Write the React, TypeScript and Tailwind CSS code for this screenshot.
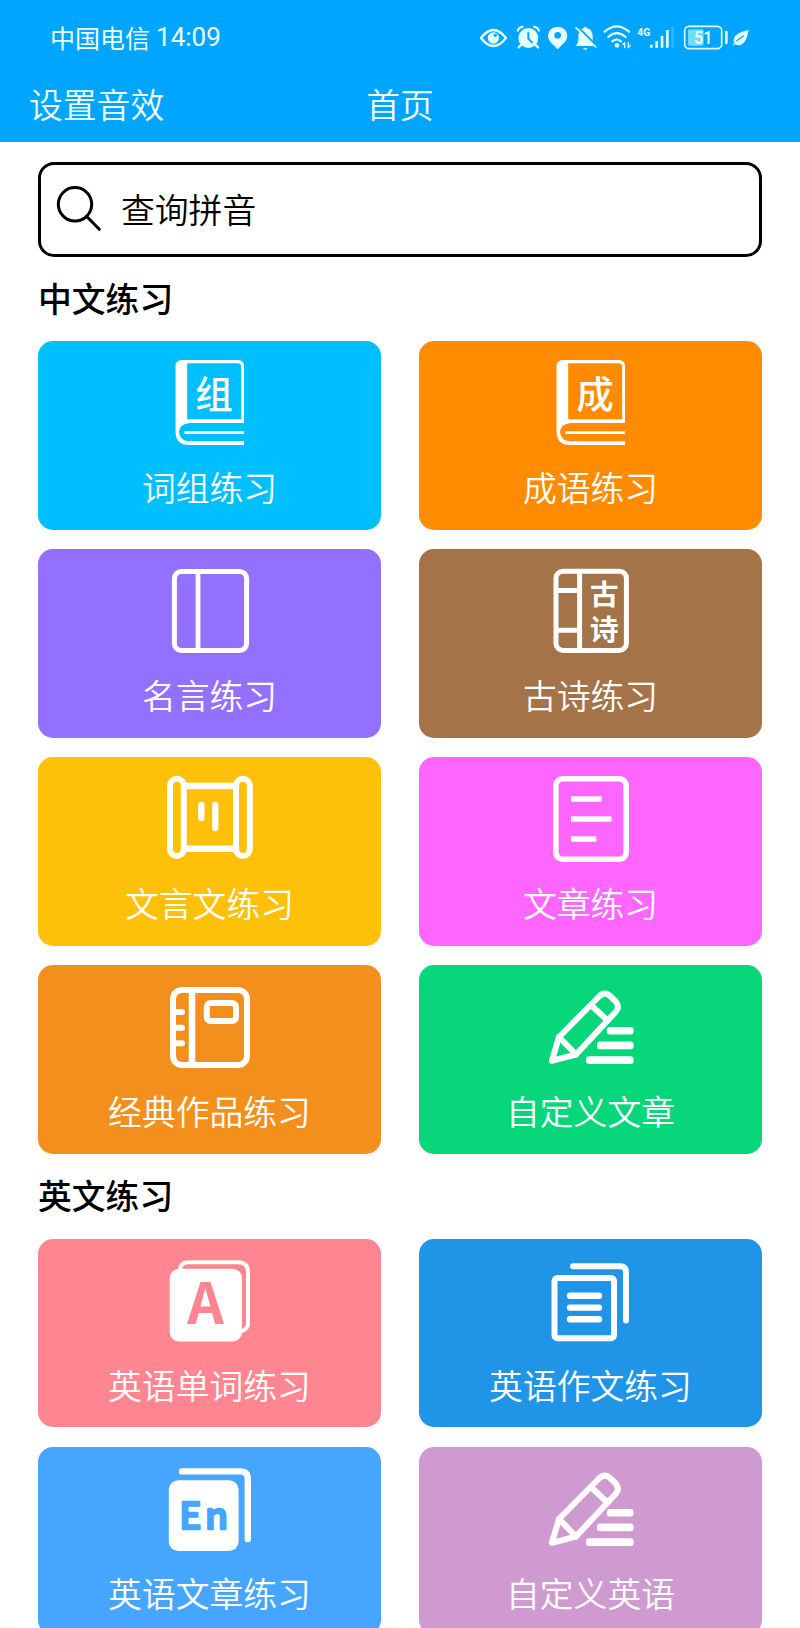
import type { ReactNode } from "react";

const cjk = "font-['Noto_Sans_CJK_SC',sans-serif]";

function StatusIcons() {
  return (
    <svg className="h-[60px] w-[310px]" viewBox="0 0 930 180" fill="none" stroke="#e6ffff" strokeLinecap="round" strokeLinejoin="round">
      {/* eye */}
      <path d="M63 84Q100 36 138 84Q100 132 63 84Z" strokeWidth="7" />
      <circle cx="100" cy="84" r="17" fill="#e6ffff" stroke="none" />
      <circle cx="106" cy="76" r="5" fill="#00a5ff" stroke="none" />
      {/* alarm */}
      <circle cx="205" cy="84" r="30" fill="#e6ffff" stroke="none" />
      <path d="M173 62Q176 52 188 50M237 62Q234 52 222 50" strokeWidth="6" />
      <path d="M184 104L176 112M226 104L234 112" strokeWidth="7" />
      <path d="M205 68V86L216 97" stroke="#00a5ff" strokeWidth="6" />
      {/* location */}
      <path d="M293 118C281 104 264 94 264 77A29 27 0 0 1 322 77C322 94 305 104 293 118Z" fill="#e6ffff" stroke="none" />
      <circle cx="293" cy="76" r="10" fill="#00a5ff" stroke="none" />
      {/* muted bell */}
      <path d="M346 108Q355 100 355 86V76Q357 56 371 55Q376 44 381 55Q397 58 398 78V88Q399 100 406 108Z" fill="#e6ffff" stroke="none" />
      <path d="M369 115H383Q376 124 369 115Z" fill="#e6ffff" stroke="none" />
      <path d="M353 50L412 109" stroke="#00a5ff" strokeWidth="6" />
      <path d="M348 53L407 111" strokeWidth="5" />
      {/* wifi */}
      <path d="M434 65Q470 33 507 65M445 81Q470 58 497 81M457 94Q470 83 483 94" strokeWidth="6.5" />
      <circle cx="471" cy="106" r="7" fill="#e6ffff" stroke="none" />
      <path d="M489 103L494 98V113M505 98V113L511 106" strokeWidth="4" />
      {/* cellular */}
      <text x="532" y="78" fontSize="35" fontWeight="700" fill="#e6ffff" stroke="none" className="font-[Roboto,sans-serif]" textLength="39" lengthAdjust="spacingAndGlyphs">4G</text>
      <path d="M574 104V113M590 93V113M606 77V113M622 60V113" strokeWidth="8" strokeLinecap="butt" />
      <path d="M638 50V113" stroke="#24baff" strokeWidth="8" strokeLinecap="butt" />
      {/* battery */}
      <rect x="674" y="49" width="111" height="67" rx="13" strokeWidth="5" />
      <rect x="684" y="58" width="47" height="49" rx="5" fill="#6cdcff" stroke="none" />
      <path d="M799 66V99" strokeWidth="8" />
      <text x="702" y="101" fontSize="54" fontWeight="500" fill="#f0ffff" stroke="none" className="font-[Roboto,sans-serif]" textLength="55" lengthAdjust="spacingAndGlyphs">51</text>
      {/* leaf */}
      <path d="M866 60Q859 104 836 106Q816 105 822 85Q829 67 866 60Z" fill="#e6ffff" stroke="none" />
      <path d="M820 104Q832 88 850 78" stroke="#00a5ff" strokeWidth="4" />
      <path d="M821 104L829 95" strokeWidth="4" />
    </svg>
  );
}

function Icon({ children }: { children: ReactNode }) {
  return (
    <svg className="size-[100px] shrink-0" viewBox="0 0 100 100" fill="none" stroke="#fff" strokeWidth="6" strokeLinecap="round" strokeLinejoin="round">
      {children}
    </svg>
  );
}

function BookIcon({ char }: { char: string }) {
  return (
    <Icon>
      <path
        d="M22 9H77.5Q84 9 84 15.5V72H30Q19 73 19 81Q20 90.3 30 90.3H84V94H29Q15.5 94 15.5 80V15.5Q15.5 9 22 9ZM27.2 12.3V68.3H81.2V16Q81.2 12.3 77.5 12.3Z"
        fill="#fff"
        fillRule="evenodd"
        stroke="none"
      />
      <path d="M24.5 81.7H84" strokeWidth="2.8" strokeLinecap="butt" />
      <text x="54" y="56.5" textAnchor="middle" fontSize="37.5" fontWeight="500" fill="#fff" stroke="none" className="font-['Noto_Sans_CJK_SC',sans-serif]">{char}</text>
    </Icon>
  );
}

function NotebookIcon() {
  return (
    <Icon>
      <rect x="14.4" y="12.5" width="72.2" height="79" rx="7" strokeWidth="5" />
      <path d="M38 13V91" strokeWidth="4.8" strokeLinecap="butt" />
    </Icon>
  );
}

function PoetryIcon() {
  return (
    <Icon>
      <rect x="15" y="12.2" width="70.4" height="79.2" rx="7" strokeWidth="5" />
      <path d="M38.6 13V91M15 31.5H38M15 71.2H38" strokeWidth="5" strokeLinecap="butt" />
      <g fontSize="28.5" fontWeight="700" fill="#fff" stroke="none" textAnchor="middle" className="font-['Noto_Sans_CJK_SC',sans-serif]">
        <text x="63.2" y="46">古</text>
        <text x="63.2" y="80.5">诗</text>
      </g>
    </Icon>
  );
}

function ScrollIcon() {
  return (
    <Icon>
      <rect x="10" y="11.8" width="13.8" height="77.2" rx="6.9" />
      <rect x="76" y="11.8" width="13.8" height="77.2" rx="6.9" />
      <path d="M24 19H76M24 81.7H76" strokeWidth="6.6" />
      <path d="M41.3 38V51M55.3 38V61" strokeWidth="6.3" />
    </Icon>
  );
}

function ArticleIcon() {
  return (
    <Icon>
      <rect x="14.8" y="11.8" width="70.4" height="80.4" rx="7" strokeWidth="5.6" />
      <path d="M30 32H60.5M30 52H70.5M30 72H55.3" strokeWidth="5.6" strokeLinecap="butt" />
    </Icon>
  );
}

function ClassicIcon() {
  return (
    <Icon>
      <rect x="13" y="15" width="74" height="75" rx="9" />
      <path d="M32 16V89" strokeWidth="6.5" />
      <rect x="46.8" y="28" width="29.2" height="18" rx="4" />
      <path d="M13 37H22M13 52.7H22M13 68.3H22" />
    </Icon>
  );
}

function PencilIcon() {
  return (
    <Icon>
      <path d="M10.8 85.8L18 62L58 21.5Q63 16.5 68.5 20.5L74.5 26.2Q79 31.5 75 36.5L35 79.5Z" />
      <path d="M18 62L35 79.5M51 31L66.5 45.5" />
      <g fill="#fff" stroke="none">
        <rect x="65.8" y="52" width="26.8" height="7.6" rx="3" />
        <rect x="56" y="66.6" width="36.6" height="7.6" rx="3" />
        <rect x="45" y="81.3" width="47.6" height="7.6" rx="3" />
      </g>
    </Icon>
  );
}

function WordsIcon() {
  return (
    <Icon>
      <path d="M20 20Q21 13.3 29 13.3H78Q88 13.3 88 23.3V74Q88 80 82 82" strokeWidth="4" />
      <rect x="9.7" y="19.7" width="72.3" height="72.8" rx="9.5" fill="#fff" stroke="none" />
      <text x="45.4" y="74.5" textAnchor="middle" fontSize="57" fontWeight="700" fill="#ff8690" stroke="none" className="font-['Noto_Sans_CJK_SC',sans-serif]">A</text>
    </Icon>
  );
}

function CompositionIcon() {
  return (
    <Icon>
      <rect x="13.5" y="29" width="59.5" height="60.3" rx="3" />
      <path d="M32 17.3H79Q85 17.3 85 23.3V71.6" />
      <path d="M29 46.8H58M29 58.6H58M29 70.3H58" strokeWidth="6.4" />
    </Icon>
  );
}

function EnglishIcon() {
  return (
    <Icon>
      <path d="M22 14.4H80Q87.8 14.4 87.8 22V82" strokeWidth="6.4" />
      <rect x="8.8" y="23.3" width="69.8" height="70.7" rx="9.5" fill="#fff" stroke="none" />
      <text y="72" fontSize="37" fontWeight="500" fill="#46a6ff" stroke="#46a6ff" strokeWidth="2.4" className="font-['Noto_Sans_CJK_SC',sans-serif]">
        <tspan x="19.2">E</tspan>
        <tspan x="45">n</tspan>
      </text>
    </Icon>
  );
}

type Item = { label: string; color: string; icon: ReactNode };

const chinese: Item[] = [
  { label: "词组练习", color: "bg-[#00bfff]", icon: <BookIcon char="组" /> },
  { label: "成语练习", color: "bg-[#ff8c00]", icon: <BookIcon char="成" /> },
  { label: "名言练习", color: "bg-[#9370ff]", icon: <NotebookIcon /> },
  { label: "古诗练习", color: "bg-[#a57348]", icon: <PoetryIcon /> },
  { label: "文言文练习", color: "bg-[#fec008]", icon: <ScrollIcon /> },
  { label: "文章练习", color: "bg-[#ff66ff]", icon: <ArticleIcon /> },
  { label: "经典作品练习", color: "bg-[#f3901d]", icon: <ClassicIcon /> },
  { label: "自定义文章", color: "bg-[#07d67b]", icon: <PencilIcon /> },
];

const english: Item[] = [
  { label: "英语单词练习", color: "bg-[#ff8690]", icon: <WordsIcon /> },
  { label: "英语作文练习", color: "bg-[#2094e6]", icon: <CompositionIcon /> },
  { label: "英语文章练习", color: "bg-[#46a6ff]", icon: <EnglishIcon /> },
  { label: "自定义英语", color: "bg-[#cf9ad0]", icon: <PencilIcon /> },
];

function Section({ title, items }: { title: string; items: Item[] }) {
  return (
    <section>
      <h2 className="flex h-[84.6px] items-center pb-[2px] text-[33.8px] leading-none font-medium text-black">{title}</h2>
      <div className="grid grid-cols-2 gap-x-[38px] gap-y-[19.5px]">
        {items.map((item) => (
          <button key={item.label} className={`flex h-[188.6px] flex-col items-center rounded-[15px] pt-[10px] ${item.color}`}>
            {item.icon}
            <span className="mt-[12px] text-[33.8px] leading-[48px] font-[350] whitespace-nowrap text-white">{item.label}</span>
          </button>
        ))}
      </div>
    </section>
  );
}

export default function App() {
  return (
    <div className={`h-[1628px] w-[800px] overflow-hidden bg-white ${cjk}`}>
      <header className="h-[142px] bg-[#00a5ff] text-[#f0ffff]">
        <div className="flex h-[74px] items-center justify-between pr-[30px] pl-[50px]">
          <div className="flex items-center gap-[6px]">
            <span className="text-[25px] leading-none">中国电信</span>
            <span className="font-[Roboto,sans-serif] text-[26px] leading-none">14:09</span>
          </div>
          <div className="pt-[6px]">
            <StatusIcons />
          </div>
        </div>
        <div className="grid h-[60px] grid-cols-3 items-center px-[29px] text-[33.8px] leading-none font-[350]">
          <span>设置音效</span>
          <h1 className="text-center">首页</h1>
        </div>
      </header>
      <main className="px-[38px] pt-[19.5px]">
        <div className="flex h-[95px] items-center gap-[16px] rounded-[16px] border-[3px] border-black pl-[14px]">
          <svg className="size-[50px]" viewBox="0 0 50 50" fill="none" stroke="#000" strokeWidth="3" strokeLinecap="round">
            <circle cx="20" cy="20.3" r="16.7" />
            <path d="M31.7 32.5L44.3 45.3" />
          </svg>
          <span className="text-[33.8px] leading-none font-[350] text-black">查询拼音</span>
        </div>
        <Section title="中文练习" items={chinese} />
        <Section title="英文练习" items={english} />
      </main>
    </div>
  );
}
